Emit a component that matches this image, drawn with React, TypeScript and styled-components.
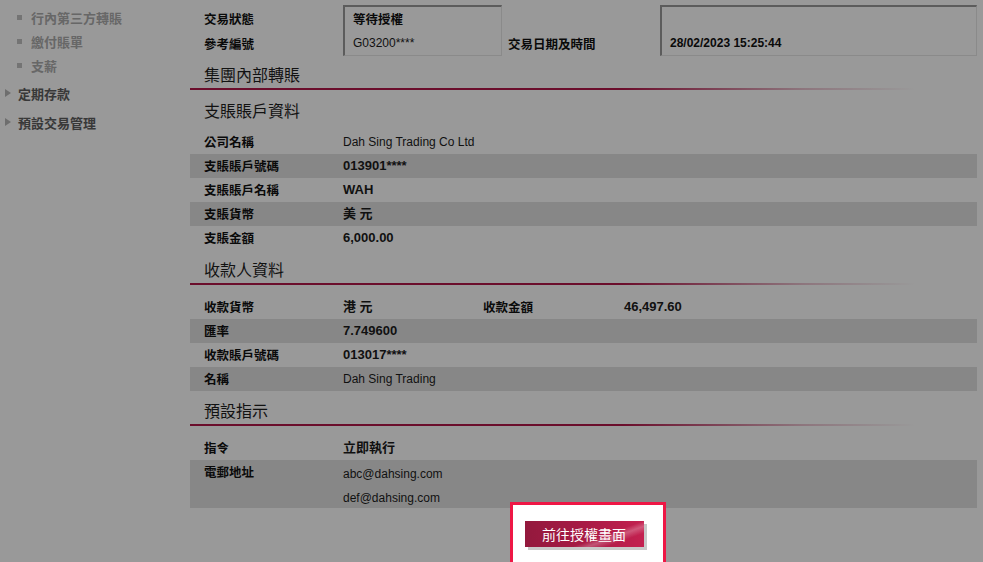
import styled, { createGlobalStyle } from "styled-components";

const GlobalStyle = createGlobalStyle`
  html, body {
    margin: 0;
    padding: 0;
    background: #fff;
    font-family: "Liberation Sans", "Noto Sans CJK TC", sans-serif;
    color: #1c1c1c;
  }
`;

type Row = {
  label: string;
  value: string;
  bold?: boolean;
  label2?: string;
  value2?: string;
};

const debitRows: Row[] = [
  { label: "公司名稱", value: "Dah Sing Trading Co Ltd" },
  { label: "支賬賬戶號碼", value: "013901****", bold: true },
  { label: "支賬賬戶名稱", value: "WAH", bold: true },
  { label: "支賬貨幣", value: "美 元", bold: true },
  { label: "支賬金額", value: "6,000.00", bold: true },
];

const payeeRows: Row[] = [
  { label: "收款貨幣", value: "港 元", bold: true, label2: "收款金額", value2: "46,497.60" },
  { label: "匯率", value: "7.749600", bold: true },
  { label: "收款賬戶號碼", value: "013017****", bold: true },
  { label: "名稱", value: "Dah Sing Trading" },
];

const App = () => {
  return (
    <>
      <GlobalStyle />
      <Page>
        <Sidebar>
          <SubItem>行內第三方轉賬</SubItem>
          <SubItem>繳付賬單</SubItem>
          <SubItem>支薪</SubItem>
          <MenuItem>定期存款</MenuItem>
          <MenuItem>預設交易管理</MenuItem>
        </Sidebar>

        <Content>
          <InfoGrid>
            <InfoLabels>
              <Label>交易狀態</Label>
              <Label>參考編號</Label>
            </InfoLabels>
            <InsetBox>
              <Label>等待授權</Label>
              <Value>G03200****</Value>
            </InsetBox>
            <InfoLabels>
              <span />
              <Label>交易日期及時間</Label>
            </InfoLabels>
            <InsetBox>
              <span />
              <DateValue>28/02/2023 15:25:44</DateValue>
            </InsetBox>
          </InfoGrid>

          <SectionTitle>集團內部轉賬</SectionTitle>
          <SubTitle>支賬賬戶資料</SubTitle>
          <Table>
            {debitRows.map((r, i) => (
              <DataRow key={r.label} $shade={i % 2 === 1}>
                <Label>{r.label}</Label>
                <Value $bold={r.bold}>{r.value}</Value>
              </DataRow>
            ))}
          </Table>

          <SectionTitle>收款人資料</SectionTitle>
          <Table>
            {payeeRows.map((r, i) => (
              <DataRow key={r.label} $shade={i % 2 === 1}>
                <Label>{r.label}</Label>
                <Value $bold={r.bold}>{r.value}</Value>
                {r.label2 && <Label>{r.label2}</Label>}
                {r.value2 && <Value $bold>{r.value2}</Value>}
              </DataRow>
            ))}
          </Table>

          <SectionTitle>預設指示</SectionTitle>
          <Table>
            <DataRow>
              <Label>指令</Label>
              <Value $bold>立即執行</Value>
            </DataRow>
            <DataRow $shade $tall>
              <Label>電郵地址</Label>
              <EmailList>
                <span>abc@dahsing.com</span>
                <span>def@dahsing.com</span>
              </EmailList>
            </DataRow>
          </Table>

          <ButtonArea>
            <Spotlight>
              <AuthButton type="button">前往授權畫面</AuthButton>
            </Spotlight>
          </ButtonArea>
        </Content>
      </Page>
      <Overlay />
    </>
  );
};

export default App;

const Page = styled.div`
  display: flex;
  width: 983px;
  min-height: 562px;
`;

const Sidebar = styled.nav`
  width: 190px;
  flex-shrink: 0;
  padding-top: 5px;
  display: flex;
  flex-direction: column;
`;

const SubItem = styled.div`
  display: flex;
  align-items: center;
  height: 24px;
  padding-left: 31px;
  position: relative;
  font-family: "Noto Sans CJK TC", sans-serif;
  font-size: 13px;
  font-weight: bold;
  color: #acacac;

  &::before {
    content: "";
    position: absolute;
    left: 17px;
    top: 10px;
    width: 5px;
    height: 5px;
    background: #c2c2c2;
  }
`;

const MenuItem = styled.div`
  display: flex;
  align-items: center;
  height: 29px;
  padding-left: 18px;
  position: relative;
  font-family: "Noto Sans CJK TC", sans-serif;
  font-size: 13px;
  font-weight: bold;
  color: #5e5e5e;

  &:nth-child(4) {
    margin-top: 2px;
  }

  &::before {
    content: "";
    position: absolute;
    left: 5px;
    top: 10px;
    border-left: 6px solid #b8b8b8;
    border-top: 4px solid transparent;
    border-bottom: 4px solid transparent;
  }
`;

const Content = styled.main`
  width: 787px;
  display: flex;
  flex-direction: column;
`;

const InfoGrid = styled.div`
  display: grid;
  grid-template-columns: 153px 159px 158px 1fr;
  margin-top: 5px;
  height: 50px;
`;

const InfoLabels = styled.div`
  display: grid;
  grid-template-rows: 25px 25px;
  align-items: center;
  padding-left: 14px;
  padding-top: 1px;

  &:nth-child(3) {
    padding-left: 6px;
  }
`;

const InsetBox = styled.div`
  display: grid;
  grid-template-rows: 24px 24px;
  align-items: center;
  padding-left: 8px;
  border-top: 2px solid #999;
  border-left: 2px solid #999;
  border-right: 1px solid #e6e6e6;
  border-bottom: 1px solid #e6e6e6;
`;

const Label = styled.span`
  font-family: "Noto Sans CJK TC", sans-serif;
  font-size: 12.5px;
  font-weight: bold;
  color: #111;
  line-height: 16px;
`;

const Value = styled.span<{ $bold?: boolean }>`
  font-family: "Liberation Sans", "Noto Sans CJK TC", sans-serif;
  font-size: ${(p) => (p.$bold ? "13px" : "12px")};
  font-weight: ${(p) => (p.$bold ? "bold" : "normal")};
  color: #1c1c1c;
  line-height: 16px;
`;

const DateValue = styled.span`
  font-family: "Liberation Sans", sans-serif;
  font-size: 12px;
  font-weight: bold;
  color: #111;
  line-height: 16px;
`;

const SectionTitle = styled.h2`
  margin: 0 0 10px;
  padding: 9px 0 4px 14px;
  font-family: "Noto Sans CJK TC", sans-serif;
  font-size: 16px;
  font-weight: normal;
  line-height: 20px;
  color: #1e1e1e;
  border-bottom: 2px solid transparent;
  border-image: linear-gradient(
      to right,
      #b3184a 0%,
      #b3184a 55%,
      rgba(179, 24, 74, 0.25) 78%,
      rgba(179, 24, 74, 0) 92%
    )
    1;
`;

const SubTitle = styled.h3`
  margin: 0;
  padding: 0 0 10px 14px;
  font-family: "Noto Sans CJK TC", sans-serif;
  font-size: 16px;
  font-weight: normal;
  line-height: 20px;
  color: #1e1e1e;
`;

const Table = styled.div`
  display: flex;
  flex-direction: column;
`;

const DataRow = styled.div<{ $shade?: boolean; $tall?: boolean }>`
  display: grid;
  grid-template-columns: 139px 140px 141px 1fr;
  align-items: ${(p) => (p.$tall ? "start" : "center")};
  height: ${(p) => (p.$tall ? "48px" : "24px")};
  padding-left: 14px;
  background: ${(p) => (p.$shade ? "#e2e2e2" : "transparent")};

  & > span:first-child {
    padding-top: ${(p) => (p.$tall ? "4px" : "0")};
  }
`;

const EmailList = styled.div`
  display: grid;
  grid-template-rows: 24px 23px;
  align-items: center;
  grid-column: 2 / 4;
  padding-top: 2px;
  font-family: "Liberation Sans", sans-serif;
  font-size: 12px;
  color: #1c1c1c;
`;

const ButtonArea = styled.div`
  display: flex;
  justify-content: center;
`;

const Spotlight = styled.div`
  position: relative;
  z-index: 20;
  margin: -6px 0 0 8px;
  padding: 16px 19px 17px 12px;
  background: #fff;
  border: 3px solid #ee1745;
`;

const AuthButton = styled.button`
  width: 119px;
  height: 26px;
  border: none;
  padding: 0;
  font-family: "Noto Sans CJK TC", sans-serif;
  font-size: 14px;
  color: #fff;
  cursor: pointer;
  background: linear-gradient(
      160deg,
      rgba(255, 255, 255, 0) 0%,
      rgba(255, 255, 255, 0) 62%,
      rgba(255, 255, 255, 0.25) 70%,
      rgba(255, 255, 255, 0) 80%
    ),
    linear-gradient(to right, #93193d 0%, #a81a45 50%, #c42150 100%);
  box-shadow: 3px 3px 0 #c9c9c9;
`;

const Overlay = styled.div`
  position: fixed;
  inset: 0;
  z-index: 10;
  background: rgba(0, 0, 0, 0.4);
  pointer-events: none;
`;
